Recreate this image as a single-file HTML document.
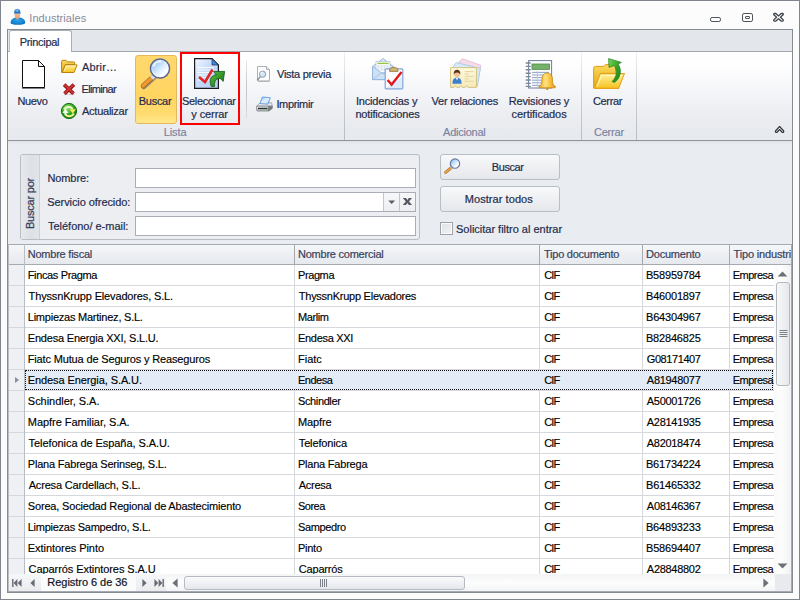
<!DOCTYPE html>
<html lang="es">
<head>
<meta charset="utf-8">
<title>Industriales</title>
<style>
*,*:before,*:after{box-sizing:border-box;margin:0;padding:0}
html,body{width:800px;height:600px;overflow:hidden}
body{position:relative;background:#fcfcfc;font-family:"Liberation Sans",sans-serif;font-size:11px;letter-spacing:-0.2px;color:#2c3452;line-height:13px}
#win{position:absolute;left:0;top:0;width:800px;height:600px;background:#fcfcfc;overflow:hidden}
#winb{position:absolute;left:0;top:0;width:800px;height:600px;border:1px solid #80858d;pointer-events:none}
#frame{position:absolute;left:7px;top:29px;width:786px;height:564px;border:1px solid #868b92;background:#e9ecf0}
.t{position:absolute;white-space:nowrap}
svg{position:absolute;overflow:visible}
/* title */
.ttl{color:#878b9c}
/* tabs (page coords) */
#tabbar{position:absolute;left:8px;top:30px;width:784px;height:21px;background:#e3e6ea}
#tabline{position:absolute;left:8px;top:51px;width:784px;height:1px;background:#a3a8ae}
#tab{position:absolute;left:9px;top:30px;width:63px;height:22px;background:#fff;border:1px solid #a9aeb5;border-left-color:#bcc0c6;border-bottom:none;border-radius:3px 3px 0 0}
/* ribbon */
#ribbon{position:absolute;left:8px;top:52px;width:784px;height:88px;background:linear-gradient(#ffffff 0,#fefefe 14%,#f5f6f9 42%,#ebedf1 72%,#e6e9ed 100%)}
#ribline{position:absolute;left:8px;top:140px;width:784px;height:1px;background:#8f949b}
#ribshadow{position:absolute;left:8px;top:141px;width:784px;height:3px;background:linear-gradient(#dfe2e6,#e9ecf0)}
.gsep{position:absolute;top:52px;width:1px;height:88px;background:linear-gradient(#eef0f2,#c9cdd3 50%,#b9bec5)}
.isep{position:absolute;top:60px;width:1px;height:58px;background:linear-gradient(#e6e8eb,#bfc3c9 50%,#d9dce0)}
.cap{position:absolute;color:#79819f;white-space:nowrap;-webkit-text-stroke:0.15px #79819f}
.lbl{position:absolute;color:#232c4b;white-space:nowrap;-webkit-text-stroke:0.2px #232c4b}
/* search area */
#gb{position:absolute;left:20px;top:154px;width:400px;height:86px;border:1px solid #b9bdc4;border-radius:3px;background:#eceef2}
#gbcap{position:absolute;left:21px;top:155px;width:19px;height:84px;background:linear-gradient(90deg,#e7e9ed,#dde0e4 55%,#e1e4e8);border-right:1px solid #cdd1d6;border-radius:2px 0 0 2px}
#gbcapt{position:absolute;left:4px;top:197px;width:52px;height:13px;transform:rotate(-90deg);text-align:center;white-space:nowrap;color:#333c58;-webkit-text-stroke:0.2px #333c58}
.inp{position:absolute;background:#fff;border:1px solid #a9aeb6;height:20px}
.btn{position:absolute;border:1px solid #b9bdc4;border-radius:3px;background:linear-gradient(#f8f9fa,#eceef1 60%,#e6e8ec);height:26px;width:120px}
/* grid */
#grid{position:absolute;left:8px;top:244px;width:784px;height:330px;background:#fff;overflow:hidden}
#grid>*{position:absolute}
#ghead{left:0;top:0;width:784px;height:21px;background:linear-gradient(#f6f7f9,#eceef2 55%,#e6e9ed);border-top:1px solid #a5aab1;border-bottom:1px solid #a5aab1}
#hclip{position:absolute;left:0;top:0;width:791px;height:600px;overflow:hidden;pointer-events:none}
.hd{position:absolute;color:#37405c;white-space:nowrap;-webkit-text-stroke:0.2px #37405c}
.navt{position:absolute;color:#10131f;white-space:nowrap;-webkit-text-stroke:0.2px #10131f}
.hs{top:0;width:1px;height:21px;background:#a5aab1}
.vs{top:21px;width:1px;height:312px;background:#d5d8dd}
.row{left:0;width:766px;height:21px;border-bottom:1px solid #d5d8dd;color:#000;-webkit-text-stroke:0.15px #000}
.row span{position:absolute;top:4px;white-space:nowrap}
.row .c0{left:0;top:0;width:16px;height:20px;background:#eef0f3}
.row.sel{background:#e2ebf6}
.row.sel:after{content:"";position:absolute;left:17px;top:0;width:748px;height:20px;border:1px dotted #111}
.ind{position:absolute;left:7px;top:7px;width:0;height:0;border-left:4px solid #8a8f9a;border-top:3.5px solid transparent;border-bottom:3.5px solid transparent}
#gleft{left:0;top:0;width:1px;height:330px;background:#b9bdc4}
#indsep{left:16px;top:0;width:1px;height:332px;background:#b9bdc4}
/* scrollbars */
#vsb{left:766px;top:21px;width:17px;height:309px;background:linear-gradient(90deg,#fafafb,#fdfdfd 40%,#f1f2f4)}
#gright{left:783px;top:0;width:1px;height:330px;background:#a5aab2}
#vthumb{position:absolute;left:2px;top:17px;width:14px;height:104px;border:1px solid #b5bac1;border-radius:3px;background:linear-gradient(90deg,#f7f8f9,#e6e8ec)}
#nav{position:absolute;left:8px;top:574px;width:784px;height:18px;border-bottom:1px solid #a5aab2;background:linear-gradient(#f6f7f9,#e9ebee)}
#navleft{position:absolute;left:0;top:0;width:1px;height:17px;background:#b9bdc4}
#navlbl{position:absolute;left:33px;top:0;width:95px;height:17px;background:#fbfbfc}
#hsb{position:absolute;left:158px;top:0;width:609px;height:17px;background:linear-gradient(#f3f4f6,#fdfdfd 50%,#f3f4f6)}
#hthumb{position:absolute;left:18px;top:2px;width:281px;height:14px;border:1px solid #b5bac1;border-radius:3px;background:linear-gradient(#f9fafb,#e6e8ec)}
#corner{position:absolute;left:767px;top:0;width:16px;height:17px;background:#e8eaee}
#navright{position:absolute;left:783px;top:0;width:1px;height:17px;background:#a5aab2}
</style>
</head>
<body>
<div id="win">
<div id="frame"></div>
<!-- title bar -->
<svg id="ico-user" style="left:9px;top:8px" width="18" height="18" viewBox="0 0 18 18">
  <defs>
    <radialGradient id="gbody" cx=".5" cy=".35" r=".75"><stop offset="0" stop-color="#2ea2e6"/><stop offset=".6" stop-color="#1485d2"/><stop offset="1" stop-color="#0a62b4"/></radialGradient>
    <linearGradient id="gcap" x1="0" y1="0" x2="0" y2="1"><stop offset="0" stop-color="#4c9ee2"/><stop offset="1" stop-color="#1c69bf"/></linearGradient>
    <linearGradient id="gface" x1="0" y1="0" x2="0" y2="1"><stop offset="0" stop-color="#f7d2b4"/><stop offset="1" stop-color="#ea9e72"/></linearGradient>
  </defs>
  <path d="M1.6 14.8 C1.6 11.4 4.4 10 6.8 9.6 L11 9.6 C13.4 10 16.2 11.4 16.2 14.8 C16.2 16.2 13 16.8 8.9 16.8 C4.8 16.8 1.6 16.2 1.6 14.8 Z" fill="url(#gbody)"/>
  <path d="M6.2 9.4 L8.3 11.9 L10.4 9.4 L10 8 L6.6 8 Z" fill="#e8a079"/>
  <ellipse cx="8.3" cy="6.4" rx="2.8" ry="3.4" fill="url(#gface)"/>
  <path d="M5.1 5 C5.1 2.2 6.5 .8 8.3 .8 C10.1 .8 11.5 2.2 11.5 5 L12.2 5.4 L4.8 5.4 Z" fill="url(#gcap)"/>
  <path d="M7.4 1.6 L9 1.6 L9.4 3.6 L7.2 3.6 Z" fill="#a9d0f2" opacity=".7"/>
</svg>
<span class="t ttl" style="left:29.29px;top:12px;letter-spacing:0.057px">Industriales</span>
<svg id="ico-min" style="left:709px;top:16px" width="13" height="7" viewBox="0 0 13 7"><rect x="1.5" y="1.5" width="10" height="4" rx="1.6" fill="#fff" stroke="#4c515a" stroke-width="1"/></svg>
<svg id="ico-max" style="left:741px;top:12px" width="13" height="11" viewBox="0 0 13 11"><rect x="1.5" y="1.5" width="10" height="8" rx="1.6" fill="#fff" stroke="#4c515a" stroke-width="1"/><rect x="4.5" y="4.5" width="4" height="2" rx=".5" fill="#fff" stroke="#4c515a" stroke-width="1"/></svg>
<svg id="ico-close" style="left:772px;top:12px" width="13" height="11" viewBox="0 0 13 11"><path d="M2.2 1.5 L3.9 1.5 L6.5 3.9 L9.1 1.5 L10.8 1.5 Q11.8 2.3 10.9 3.1 L8.4 5.3 L10.9 7.5 Q11.8 8.3 10.8 9.1 L9.1 9.1 L6.5 6.7 L3.9 9.1 L2.2 9.1 Q1.2 8.3 2.1 7.5 L4.6 5.3 L2.1 3.1 Q1.2 2.3 2.2 1.5 Z" fill="#fff" stroke="#40454d" stroke-width="1.3" stroke-linejoin="round"/></svg>
<div id="tabbar"></div>
<div id="tabline"></div>
<div id="tab"></div>
<span class="lbl" style="left:19.67px;top:36px;letter-spacing:-0.297px">Principal</span>
<!-- ribbon -->
<div id="ribbon"></div>
<div id="ribline"></div>
<div id="ribshadow"></div>
<svg width="0" height="0" style="left:0;top:0">
  <defs>
    <linearGradient id="gFold" x1="0" y1="0" x2="0" y2="1"><stop offset="0" stop-color="#fff2a0"/><stop offset="1" stop-color="#f6c21c"/></linearGradient>
    <linearGradient id="gFoldB" x1="0" y1="0" x2="0" y2="1"><stop offset="0" stop-color="#fbd95e"/><stop offset="1" stop-color="#e3a810"/></linearGradient>
    <linearGradient id="gLens" x1="0.1" y1="0.1" x2="0.9" y2="0.9"><stop offset="0" stop-color="#86c0f2"/><stop offset=".45" stop-color="#cfe6fb"/><stop offset=".8" stop-color="#ffffff"/><stop offset="1" stop-color="#e4f1fd"/></linearGradient>
    <linearGradient id="gHandle" x1="0" y1="0" x2="1" y2="1"><stop offset="0" stop-color="#ffb84d"/><stop offset="1" stop-color="#e07a10"/></linearGradient>
    <radialGradient id="gGreen" cx=".4" cy=".3" r=".75"><stop offset="0" stop-color="#8be06a"/><stop offset=".6" stop-color="#2ba31d"/><stop offset="1" stop-color="#0f7a0f"/></radialGradient>
    <linearGradient id="gDoc" x1="0" y1="0" x2="1" y2="1"><stop offset="0" stop-color="#f4f8ff"/><stop offset=".45" stop-color="#c6dafa"/><stop offset="1" stop-color="#b9cdf5"/></linearGradient>
    <linearGradient id="gArrow" x1="0" y1="0" x2="1" y2="1"><stop offset="0" stop-color="#58c043"/><stop offset="1" stop-color="#166d16"/></linearGradient>
    <linearGradient id="gEnv" x1="0" y1="0" x2="0" y2="1"><stop offset="0" stop-color="#eaf3fc"/><stop offset="1" stop-color="#b4d0ee"/></linearGradient>
    <linearGradient id="gBell" x1="0" y1="0" x2="1" y2="0"><stop offset="0" stop-color="#eaa51a"/><stop offset=".4" stop-color="#ffe283"/><stop offset=".7" stop-color="#f6bf3a"/><stop offset="1" stop-color="#d98f0e"/></linearGradient>
    <linearGradient id="gCard" x1="0" y1="0" x2="0" y2="1"><stop offset="0" stop-color="#fefadf"/><stop offset="1" stop-color="#f4e9b8"/></linearGradient>
    <linearGradient id="gArrow2" x1="0" y1="0" x2="1" y2="1"><stop offset="0" stop-color="#7ed45a"/><stop offset=".5" stop-color="#35a528"/><stop offset="1" stop-color="#187a18"/></linearGradient>
    <linearGradient id="gPrn" x1="0" y1="0" x2="0" y2="1"><stop offset="0" stop-color="#f6f7f8"/><stop offset="1" stop-color="#b9bdc2"/></linearGradient>
    <linearGradient id="gPaper" x1="0" y1="0" x2="1" y2="1"><stop offset="0" stop-color="#7fb7ee"/><stop offset=".5" stop-color="#e6f1fc"/><stop offset="1" stop-color="#a9cff3"/></linearGradient>
  </defs>
</svg>

<!-- Nuevo -->
<svg style="left:22px;top:60px" width="24" height="30" viewBox="0 0 24 30">
  <path d="M0.5 0.5 L16.5 0.5 L22.5 6.5 L22.5 27.5 L0.5 27.5 Z" fill="#fff" stroke="#111" stroke-width="1"/>
  <path d="M16.5 0.5 L16.5 6.5 L22.5 6.5 Z" fill="#f4f4f4" stroke="#111" stroke-width="1" stroke-linejoin="round"/>
  <path d="M0 28.3 L23 28.3" stroke="#000" stroke-width="1" opacity=".6"/>
</svg>
<span class="lbl" style="left:17.47px;top:95px;letter-spacing:-0.367px">Nuevo</span>

<!-- Abrir -->
<svg style="left:61px;top:59px" width="17" height="15" viewBox="0 0 17 15">
  <path d="M.6 13.4 L.6 2.4 Q.6 1.3 1.7 1.3 L5 1.3 L6.4 2.9 L12.8 2.9 Q13.7 2.9 13.7 3.9 L13.7 5.6 L4.6 5.6 L1.6 13.4 Z" fill="url(#gFoldB)" stroke="#b9820c" stroke-width="1"/>
  <path d="M1.3 13.5 L4.4 5.9 L16.1 5.9 L13 13.5 Z" fill="url(#gFold)" stroke="#b9820c" stroke-width="1" stroke-linejoin="round"/>
  <path d="M2.8 12.4 L5.2 6.9 L14.6 6.9" fill="none" stroke="#fffbd6" stroke-width=".8" opacity=".9"/>
</svg>
<span class="lbl" style="left:82.04px;top:61px;letter-spacing:0.139px">Abrir…</span>

<!-- Eliminar -->
<svg style="left:62px;top:82px" width="14" height="14" viewBox="0 0 14 14">
  <path d="M2 12.6 L12.4 12.6" stroke="#9aa0a8" stroke-width="1" opacity=".45"/>
  <path d="M2.1 2.6 L11.5 11.6 M11.9 2.6 L2.5 11.6" stroke="#8f1010" stroke-width="3.6" stroke-linecap="butt"/>
  <path d="M2.3 2.6 L11.5 11.4 M11.7 2.6 L2.5 11.4" stroke="#c42222" stroke-width="2.1" stroke-linecap="butt"/>
  <path d="M2.3 2.6 L11.5 11.4 M11.7 2.6 L2.5 11.4" stroke="#e86a6a" stroke-width="1.6" stroke-dasharray="1 1" opacity=".55"/>
</svg>
<span class="lbl" style="left:81.47px;top:83px;letter-spacing:-0.639px">Eliminar</span>

<!-- Actualizar -->
<svg style="left:61px;top:103px" width="17" height="17" viewBox="0 0 17 17">
  <circle cx="8" cy="8" r="7.6" fill="url(#gGreen)" stroke="#136c13" stroke-width="1"/>
  <path d="M3 6.6 A5.2 5.2 0 0 1 11.8 6" fill="none" stroke="#e9f6c4" stroke-width="2.1"/>
  <path d="M8.6 6.2 L14.9 6.2 L11.75 10.4 Z" fill="#ffe95e"/>
  <path d="M12.9 10.4 A5.2 5.2 0 0 1 4.5 11.6" fill="none" stroke="#f1ee8e" stroke-width="2.1"/>
  <path d="M1.3 10 L7.6 10 L4.45 5.8 Z" fill="#f6fcea"/>
  <path d="M4.45 9.8 L4.45 12" stroke="#f6fcea" stroke-width="2.1"/>
</svg>
<span class="lbl" style="left:82.04px;top:105px;letter-spacing:-0.254px">Actualizar</span>

<!-- Buscar (highlighted) -->
<div style="position:absolute;left:135px;top:55px;width:42px;height:69px;border:1px solid #e5b85c;border-radius:3px;background:linear-gradient(#ffd86e 0,#ffd561 60%,#ffdb6f 85%,#ffe88a 100%)"></div>
<svg style="left:139px;top:57px" width="34" height="34" viewBox="0 0 34 34">
  <path d="M15.2 20.6 L4.8 30" stroke="#6f747c" stroke-width="4.6" stroke-linecap="round" opacity=".75"/>
  <path d="M14.5 19.5 L4.2 28.8" stroke="#a8641c" stroke-width="4.8" stroke-linecap="round"/>
  <path d="M14.5 19.5 L4.2 28.8" stroke="url(#gHandle)" stroke-width="3.4" stroke-linecap="round"/>
  <path d="M15.2 18.8 L12.6 21.2" stroke="#d9dde2" stroke-width="4.4"/>
  <circle cx="21.6" cy="12.3" r="9.6" fill="#6a6f86" opacity=".35"/>
  <circle cx="21" cy="11.5" r="9.5" fill="url(#gLens)" stroke="#5b6690" stroke-width="1.6"/>
  <circle cx="21" cy="11.5" r="8.3" fill="none" stroke="#ffffff" stroke-width=".8" opacity=".55"/>
  <path d="M14.5 9.5 A7 7 0 0 1 22 4.6" fill="none" stroke="#fff" stroke-width="1.6" opacity=".9"/>
</svg>
<span class="lbl" style="left:138.77px;top:95px;letter-spacing:-0.276px">Buscar</span>

<!-- Seleccionar y cerrar -->
<div style="position:absolute;left:180px;top:52px;width:60px;height:73px;border:2px solid #f00"></div>
<svg style="left:193px;top:57px" width="34" height="34" viewBox="0 0 34 34">
  <path d="M1.6 1.6 L19 1.6 L25.4 8 L25.4 31.4 L1.6 31.4 Z" fill="url(#gDoc)" stroke="#1a1a1a" stroke-width="1.2"/>
  <path d="M19 1.6 L19 8 L25.4 8 Z" fill="#3d8de6" stroke="#1a1a1a" stroke-width=".6"/>
  <path d="M4.5 10.5 H21 M4.5 13 H21 M4.5 15.5 H21 M4.5 18 H21 M4.5 20.5 H16 M4.5 23 H16" stroke="#fff" stroke-width="1" opacity=".85"/>
  <path d="M6 20 L12 25 L19.5 12.5" fill="none" stroke="#e0262a" stroke-width="2.6"/>
  <path d="M18.2 29.4 C15.4 22 19 17.6 23.4 17.8 L20.4 14.6 L31.6 14.4 L30.2 24.4 L27.2 21.4 C23.2 21.2 21 24 21.6 29.4 Z" fill="url(#gArrow)" stroke="#0e5c12" stroke-width=".8"/>
</svg>
<span class="lbl" style="left:182.06px;top:95px;letter-spacing:-0.351px">Seleccionar</span>
<span class="lbl" style="left:191.24px;top:108px;letter-spacing:-0.079px">y cerrar</span>

<div class="isep" style="left:246px"></div>

<!-- Vista previa -->
<svg style="left:256px;top:65px" width="16" height="17" viewBox="0 0 16 17">
  <path d="M1.5 1.5 L10.5 1.5 L13.5 4.5 L13.5 15.9 L1.5 15.9 Z" fill="#fdfdfd" stroke="#adb0b5" stroke-width="1"/>
  <path d="M10.5 1.5 L10.5 4.5 L13.5 4.5" fill="#f0f0f0" stroke="#adb0b5" stroke-width="1"/>
  <path d="M2 16.6 L13.6 16.6" stroke="#8d9096" stroke-width=".8" opacity=".7"/>
  <circle cx="6.6" cy="9.2" r="3.1" fill="#d3e8fb" stroke="#8b97ad" stroke-width="1"/>
  <path d="M4.5 8.4 A2.2 2.2 0 0 1 6.9 7" fill="none" stroke="#fff" stroke-width=".8"/>
  <path d="M4.3 11.7 L1.2 15.2" stroke="#8a8f98" stroke-width="1.5"/>
</svg>
<span class="lbl" style="left:277.04px;top:68px;letter-spacing:-0.276px">Vista previa</span>

<!-- Imprimir -->
<svg style="left:256px;top:96px" width="17" height="16" viewBox="0 0 17 16">
  <path d="M.7 10.2 L4 6.8 L15.6 6.8 L16.3 10.2 Z" fill="#e7e9eb" stroke="#8e9298" stroke-width=".7"/>
  <path d="M6.4 1 L14.4 1.7 L11.8 8.2 L3.9 7.5 Z" fill="url(#gPaper)" stroke="#4f90d8" stroke-width=".8"/>
  <path d="M.7 10.2 L12.8 10.2 L12.8 15 L1.7 15 Q.7 15 .7 14 Z" fill="url(#gPrn)" stroke="#6b6f75" stroke-width=".7"/>
  <path d="M12.8 10.2 L16.3 10.2 L16.3 12.4 L12.8 15 Z" fill="#7c8086" stroke="#5d6066" stroke-width=".6"/>
  <path d="M2 12.5 L11.6 12.5" stroke="#2e3135" stroke-width="1.5"/>
  <circle cx="10.9" cy="14" r=".65" fill="#5fd13c"/>
</svg>
<span class="lbl" style="left:276.39px;top:98px;letter-spacing:-0.343px">Imprimir</span>

<div class="gsep" style="left:344px"></div>

<!-- Incidencias y notificaciones -->
<svg style="left:371px;top:57px" width="34" height="34" viewBox="0 0 34 34">
  <path d="M1.6 9.6 L12 1.6 L22.4 9.6 L22.4 22.6 L1.6 22.6 Z" fill="url(#gEnv)" stroke="#8fb3dc" stroke-width="1"/>
  <rect x="5" y="4.4" width="14" height="11" fill="#fff" stroke="#a9c2e0" stroke-width=".7"/>
  <path d="M6.4 6.4 H17.6" stroke="#9ac43c" stroke-width="1.4"/>
  <path d="M6.4 9 H17.6 M6.4 11 H17.6 M6.4 13 H17.6" stroke="#b8c6d8" stroke-width="1" stroke-dasharray="2 1"/>
  <path d="M1.6 9.6 L12 17 L22.4 9.6 L22.4 22.6 L1.6 22.6 Z" fill="#cfe1f5" stroke="#8fb3dc" stroke-width=".8"/>
  <path d="M1.8 22.4 L10.4 15.8 M22.2 22.4 L13.6 15.8" stroke="#9bbce0" stroke-width=".8"/>
  <rect x="14.2" y="11.8" width="17.6" height="20" rx="1" fill="#fdfdff" stroke="#7ea3d8" stroke-width="1.2"/>
  <path d="M15 31 L31 31 L31 20 Z" fill="#d6e3f8" opacity=".8"/>
  <path d="M18.6 13 Q18.6 10.4 22.8 10.4 Q27 10.4 27 13 L27 14.4 L18.6 14.4 Z" fill="#d2b46c" stroke="#8f7638" stroke-width=".8"/>
  <path d="M16.6 23 L20.6 27.6 L30.6 15" fill="none" stroke="#e0191e" stroke-width="2.4"/>
</svg>
<span class="lbl" style="left:355.89px;top:95px;letter-spacing:-0.158px">Incidencias y</span>
<span class="lbl" style="left:355.45px;top:108px;letter-spacing:-0.189px">notificaciones</span>

<!-- Ver relaciones -->
<svg style="left:449px;top:57px" width="34" height="34" viewBox="0 0 34 34">
  <path d="M10 5 L13.6 1.8 L32 8.4 L28 27 L10 21 Z" fill="#f8dbe8" stroke="#dcb8cc" stroke-width=".8"/>
  <path d="M4 10 L7.2 5.6 L31.4 11.4 L28.4 29.4 L4 25 Z" fill="#d5e9f8" stroke="#a4c6e0" stroke-width=".8"/>
  <path d="M1.6 10.6 L27.4 10.6 L27.4 30.4 L19 30.4 L17.6 28.6 L16.2 30.4 L13.4 30.4 L12 28.6 L10.6 30.4 L7.8 30.4 L6.4 28.6 L5 30.4 L1.6 30.4 Z" fill="url(#gCard)" stroke="#d0bc74" stroke-width=".9"/>
  <path d="M15.6 14.6 H24.6 M15.6 17 H20 M15.6 19.4 H24.6 M15.6 21.8 H20 M15.6 24.2 H24.6" stroke="#e0d4a2" stroke-width="1"/>
  <path d="M3.4 26.8 Q3.4 20.6 8 20.6 Q12.6 20.6 12.6 26.8 Z" fill="#3a7fd0"/>
  <path d="M6.6 20.8 L8 23.4 L9.4 20.8 Z" fill="#e8eef6"/>
  <circle cx="8" cy="17.2" r="2.9" fill="#efbf96"/>
  <path d="M4.7 17.4 Q4.5 12.8 8 12.8 Q11.5 12.8 11.3 17.4 Q10.4 15.4 8 15.4 Q5.6 15.4 4.7 17.4 Z" fill="#5c3212"/>
</svg>
<span class="lbl" style="left:431.54px;top:95px;letter-spacing:-0.233px">Ver relaciones</span>

<!-- Revisiones y certificados -->
<svg style="left:525px;top:58px" width="34" height="34" viewBox="0 0 34 34">
  <rect x="3.6" y="2.6" width="23" height="27.4" fill="#fcfcfd" stroke="#6a7d9c" stroke-width="1"/>
  <rect x="7" y="6" width="17.4" height="5.4" fill="#74b06a" stroke="#4e8c46" stroke-width=".8"/>
  <path d="M7 14.4 H24 M7 17 H24 M7 19.6 H24 M7 22.2 H24 M7 24.8 H24 M7 27.4 H24" stroke="#8fa3c4" stroke-width="1"/>
  <path d="M12.4 13 V28.6" stroke="#b8c4d8" stroke-width=".8"/>
  <path d="M1.2 5 H5.2 M1.2 8.4 H5.2 M1.2 11.8 H5.2 M1.2 15.2 H5.2 M1.2 18.6 H5.2 M1.2 22 H5.2 M1.2 25.4 H5.2 M1.2 28.4 H5.2" stroke="#7d8796" stroke-width="1.4" stroke-linecap="round"/>
  <path d="M13.8 28.6 Q17 27.4 16.9 22.2 Q16.8 15 22.2 15 Q27.6 15 27.5 22.2 Q27.4 27.4 30.6 28.6 Q30.6 29.8 29.2 29.8 L15.2 29.8 Q13.8 29.8 13.8 28.6 Z" fill="url(#gBell)" stroke="#c88a10" stroke-width=".8"/>
  <circle cx="22.2" cy="30.8" r="1.3" fill="#d48f12"/>
</svg>
<span class="lbl" style="left:508.87px;top:95px;letter-spacing:-0.189px">Revisiones y</span>
<span class="lbl" style="left:511.5px;top:108px;letter-spacing:-0.046px">certificados</span>

<div class="gsep" style="left:581px"></div>

<!-- Cerrar -->
<svg style="left:592px;top:57px" width="34" height="34" viewBox="0 0 34 34">
  <path d="M1.6 31 L1.6 11.4 Q1.6 9.4 3.6 9.4 L11.6 9.4 L13.6 7.6 L21.6 7.6 Q23.6 7.6 23.6 9.6 L23.6 16.4 L8.6 16.4 L3 31 Z" fill="url(#gFoldB)" stroke="#e39a16" stroke-width="1"/>
  <path d="M2.4 31.4 L8.2 16.6 L32.4 16.6 L26.6 31.4 Z" fill="url(#gFold)" stroke="#e9a21c" stroke-width="1.1" stroke-linejoin="round"/>
  <path d="M5 29.8 L9.6 18.4 L29.8 18.4" fill="none" stroke="#fff8d0" stroke-width="1" opacity=".9"/>
  <path d="M20 24.6 C25.4 19.6 25.4 12.6 22.2 8.6 L17 10.4 L16.6 1.6 L29.4 5.4 L26 7 C30.4 13 28.4 21.4 22.6 25.4 Z" fill="url(#gArrow2)" stroke="#23801f" stroke-width=".7"/>
</svg>
<span class="lbl" style="left:593.0px;top:95px;letter-spacing:-0.364px">Cerrar</span>

<div class="gsep" style="left:636px"></div>

<span class="cap" style="left:163.77px;top:126px;letter-spacing:-0.102px">Lista</span>
<span class="cap" style="left:443.04px;top:126px;letter-spacing:-0.236px">Adicional</span>
<span class="cap" style="left:594.0px;top:126px;letter-spacing:-0.224px">Cerrar</span>

<svg style="left:774.3px;top:125px" width="11.2" height="9" viewBox="0 0 12 9" preserveAspectRatio="none"><path d="M1.6 6 L6 1.6 L10.4 6 Q10.6 7.6 9 7.4 L6 4.6 L3 7.4 Q1.4 7.6 1.6 6 Z" fill="#fff" stroke="#33383f" stroke-width="1.35" stroke-linejoin="round"/></svg>
<!-- search panel -->
<div id="gb"></div>
<div id="gbcap"></div>
<span id="gbcapt">Buscar por</span>
<span class="lbl" style="left:47.47px;top:172px;letter-spacing:-0.109px">Nombre:</span>
<span class="lbl" style="left:47.26px;top:196px;letter-spacing:-0.074px">Servicio ofrecido:</span>
<span class="lbl" style="left:48.01px;top:220px;letter-spacing:-0.018px">Teléfono/ e-mail:</span>
<div class="inp" style="left:135px;top:168px;width:281px"></div>
<div class="inp" style="left:135px;top:192px;width:281px">
  <div style="position:absolute;left:247px;top:0;width:17px;height:18px;border-left:1px solid #c3c7cd;background:linear-gradient(#f6f7f8,#eceef1)"></div>
  <div style="position:absolute;left:263px;top:0;width:16px;height:18px;border-left:1px solid #c3c7cd;background:linear-gradient(#f6f7f8,#eceef1)"></div>
  <svg style="left:252px;top:7px" width="8" height="5" viewBox="0 0 8 5"><path d="M.3 .5 L7.1 .5 L3.7 4.1 Z" fill="#575c65"/></svg>
  <svg style="left:266px;top:4px" width="11" height="9" viewBox="0 0 11 9"><path d="M.8 1 L4 1 L5.4 3.1 L6.8 1 L10 1 L7 4.5 L10 8 L6.8 8 L5.4 5.9 L4 8 L.8 8 L3.8 4.5 Z" fill="#555a63"/></svg>
</div>
<div class="inp" style="left:135px;top:216px;width:281px"></div>

<div class="btn" style="left:440px;top:154px"></div>
<svg style="left:443px;top:157px" width="18" height="18" viewBox="0 0 18 18">
  <path d="M8.4 10.6 L2.6 15.4" stroke="#9a6a2a" stroke-width="2.8" stroke-linecap="round"/>
  <path d="M8.4 10.6 L2.6 15.4" stroke="#f6a93a" stroke-width="1.7" stroke-linecap="round"/>
  <path d="M9.3 9.8 L7.9 11" stroke="#cfd3d8" stroke-width="2.6"/>
  <circle cx="12" cy="6.6" r="4.7" fill="url(#gLens)" stroke="#66739a" stroke-width="1.1"/>
</svg>
<span class="lbl" style="left:491.77px;top:161px;letter-spacing:-0.416px">Buscar</span>
<div class="btn" style="left:440px;top:186px"></div>
<span class="lbl" style="left:464.77px;top:193px;letter-spacing:0.063px">Mostrar todos</span>
<div style="position:absolute;left:440px;top:222px;width:13px;height:13px;border:1px solid #9ea3ab;background:linear-gradient(135deg,#dfe1e4,#f1f2f4);box-shadow:inset 0 0 0 1px #fbfbfc"></div>
<span class="lbl" style="left:456.06px;top:223px;letter-spacing:-0.012px">Solicitar filtro al entrar</span>
<!-- grid -->
<div id="grid">
<div id="ghead"></div>
<div class="hs" style="left:16px"></div><div class="hs" style="left:286px"></div><div class="hs" style="left:531px"></div><div class="hs" style="left:634px"></div><div class="hs" style="left:721px"></div>
<div class="vs" style="left:286px"></div><div class="vs" style="left:531px"></div><div class="vs" style="left:634px"></div><div class="vs" style="left:721px"></div>
<div class="row" style="top:21px"><span class="c0"></span><span style="left:19.77px;letter-spacing:-0.36px">Fincas Pragma</span><span style="left:289.97px;letter-spacing:-0.395px">Pragma</span><span style="left:536.2px;letter-spacing:-0.802px">CIF</span><span style="left:637.97px;letter-spacing:-0.195px">B58959784</span><span style="left:724.67px;letter-spacing:-0.502px">Empresa</span></div>
<div class="row" style="top:42px"><span class="c0"></span><span style="left:20.61px;letter-spacing:-0.153px">ThyssnKrupp Elevadores, S.L.</span><span style="left:290.81px;letter-spacing:-0.254px">ThyssnKrupp Elevadores</span><span style="left:536.2px;letter-spacing:-0.802px">CIF</span><span style="left:637.97px;letter-spacing:-0.18px">B46001897</span><span style="left:724.67px;letter-spacing:-0.502px">Empresa</span></div>
<div class="row" style="top:63px"><span class="c0"></span><span style="left:19.77px;letter-spacing:-0.23px">Limpiezas Martinez, S.L.</span><span style="left:289.97px;letter-spacing:-0.394px">Marlim</span><span style="left:536.2px;letter-spacing:-0.802px">CIF</span><span style="left:637.97px;letter-spacing:-0.18px">B64304967</span><span style="left:724.67px;letter-spacing:-0.502px">Empresa</span></div>
<div class="row" style="top:84px"><span class="c0"></span><span style="left:19.77px;letter-spacing:-0.194px">Endesa Energia XXI, S.L.U.</span><span style="left:289.97px;letter-spacing:-0.295px">Endesa XXI</span><span style="left:536.2px;letter-spacing:-0.802px">CIF</span><span style="left:637.97px;letter-spacing:-0.185px">B82846825</span><span style="left:724.67px;letter-spacing:-0.502px">Empresa</span></div>
<div class="row" style="top:105px"><span class="c0"></span><span style="left:19.77px;letter-spacing:-0.155px">Fiatc Mutua de Seguros y Reaseguros</span><span style="left:289.97px;letter-spacing:0.008px">Fiatc</span><span style="left:536.2px;letter-spacing:-0.802px">CIF</span><span style="left:638.8px;letter-spacing:-0.426px">G08171407</span><span style="left:724.67px;letter-spacing:-0.502px">Empresa</span></div>
<div class="row sel" style="top:126px"><span class="c0"><i class="ind"></i></span><span style="left:19.77px;letter-spacing:-0.093px">Endesa Energia, S.A.U.</span><span style="left:289.97px;letter-spacing:-0.494px">Endesa</span><span style="left:536.2px;letter-spacing:-0.802px">CIF</span><span style="left:638.84px;letter-spacing:-0.289px">A81948077</span><span style="left:724.67px;letter-spacing:-0.502px">Empresa</span></div>
<div class="row" style="top:147px"><span class="c0"></span><span style="left:19.86px;letter-spacing:-0.039px">Schindler, S.A.</span><span style="left:290.06px;letter-spacing:-0.386px">Schindler</span><span style="left:536.2px;letter-spacing:-0.802px">CIF</span><span style="left:638.84px;letter-spacing:-0.293px">A50001726</span><span style="left:724.67px;letter-spacing:-0.502px">Empresa</span></div>
<div class="row" style="top:168px"><span class="c0"></span><span style="left:19.77px;letter-spacing:-0.042px">Mapfre Familiar, S.A.</span><span style="left:289.97px;letter-spacing:-0.098px">Mapfre</span><span style="left:536.2px;letter-spacing:-0.802px">CIF</span><span style="left:638.84px;letter-spacing:-0.294px">A28141935</span><span style="left:724.67px;letter-spacing:-0.502px">Empresa</span></div>
<div class="row" style="top:189px"><span class="c0"></span><span style="left:20.61px;letter-spacing:-0.067px">Telefonica de España, S.A.U.</span><span style="left:290.81px;letter-spacing:-0.147px">Telefonica</span><span style="left:536.2px;letter-spacing:-0.802px">CIF</span><span style="left:638.84px;letter-spacing:-0.303px">A82018474</span><span style="left:724.67px;letter-spacing:-0.502px">Empresa</span></div>
<div class="row" style="top:210px"><span class="c0"></span><span style="left:19.77px;letter-spacing:-0.195px">Plana Fabrega Serinseg, S.L.</span><span style="left:289.97px;letter-spacing:-0.217px">Plana Fabrega</span><span style="left:536.2px;letter-spacing:-0.802px">CIF</span><span style="left:637.97px;letter-spacing:-0.195px">B61734224</span><span style="left:724.67px;letter-spacing:-0.502px">Empresa</span></div>
<div class="row" style="top:231px"><span class="c0"></span><span style="left:20.64px;letter-spacing:-0.166px">Acresa Cardellach, S.L.</span><span style="left:290.84px;letter-spacing:-0.296px">Acresa</span><span style="left:536.2px;letter-spacing:-0.802px">CIF</span><span style="left:637.97px;letter-spacing:-0.179px">B61465332</span><span style="left:724.67px;letter-spacing:-0.502px">Empresa</span></div>
<div class="row" style="top:252px"><span class="c0"></span><span style="left:19.86px;letter-spacing:-0.18px">Sorea, Sociedad Regional de Abastecimiento</span><span style="left:290.06px;letter-spacing:-0.516px">Sorea</span><span style="left:536.2px;letter-spacing:-0.802px">CIF</span><span style="left:638.84px;letter-spacing:-0.289px">A08146367</span><span style="left:724.67px;letter-spacing:-0.502px">Empresa</span></div>
<div class="row" style="top:273px"><span class="c0"></span><span style="left:19.77px;letter-spacing:-0.259px">Limpiezas Sampedro, S.L.</span><span style="left:290.06px;letter-spacing:-0.366px">Sampedro</span><span style="left:536.2px;letter-spacing:-0.802px">CIF</span><span style="left:637.97px;letter-spacing:-0.184px">B64893233</span><span style="left:724.67px;letter-spacing:-0.502px">Empresa</span></div>
<div class="row" style="top:294px"><span class="c0"></span><span style="left:19.77px;letter-spacing:-0.053px">Extintores Pinto</span><span style="left:289.97px;letter-spacing:-0.249px">Pinto</span><span style="left:536.2px;letter-spacing:-0.802px">CIF</span><span style="left:637.97px;letter-spacing:-0.18px">B58694407</span><span style="left:724.67px;letter-spacing:-0.502px">Empresa</span></div>
<div class="row" style="top:315px"><span class="c0"></span><span style="left:20.6px;letter-spacing:-0.077px">Caparrós Extintores S.A.U</span><span style="left:290.8px;letter-spacing:-0.197px">Caparrós</span><span style="left:536.2px;letter-spacing:-0.802px">CIF</span><span style="left:638.84px;letter-spacing:-0.288px">A28848802</span><span style="left:724.67px;letter-spacing:-0.502px">Empresa</span></div>
<div id="indsep"></div>
<div id="gleft"></div>
<div id="gright"></div>
<div id="vsb">
  <svg style="left:3px;top:6px" width="11" height="6" viewBox="0 0 11 6"><path d="M.6 5.6 L5.5 .6 L10.4 5.6 Z" fill="#6b6f76"/></svg>
  <div id="vthumb"></div>
  <svg style="left:5px;top:65px" width="9" height="8" viewBox="0 0 9 8"><path d="M.5 .5 H8.5 M.5 2.5 H8.5 M.5 4.5 H8.5 M.5 6.5 H8.5" stroke="#7b8089" stroke-width="1"/></svg>
  <svg style="left:3px;top:298px" width="11" height="6" viewBox="0 0 11 6"><path d="M.6 .4 L10.4 .4 L5.5 5.4 Z" fill="#6b6f76"/></svg>
</div>
</div>
<div id="hclip"><span class="hd" style="left:27.77px;top:248px;letter-spacing:-0.231px">Nombre fiscal</span><span class="hd" style="left:297.97px;top:248px;letter-spacing:-0.232px">Nombre comercial</span><span class="hd" style="left:544.01px;top:248px;letter-spacing:-0.24px">Tipo documento</span><span class="hd" style="left:645.97px;top:248px;letter-spacing:-0.196px">Documento</span><span class="hd" style="left:733.51px;top:248px;letter-spacing:-0.147px">Tipo industrial</span></div>
<!-- navigator -->
<div id="nav">
  <svg style="left:4px;top:5px" width="10" height="8" viewBox="0 0 10 8"><path d="M.8 0 V8" stroke="#666b73" stroke-width="1.4"/><path d="M5.4 0 L5.4 8 L1.6 4 Z M9.6 0 L9.6 8 L5.8 4 Z" fill="#666b73"/></svg>
  <svg style="left:22px;top:5px" width="5" height="8" viewBox="0 0 5 8"><path d="M4.6 0 L4.6 8 L.4 4 Z" fill="#666b73"/></svg>
  <div id="navlbl"></div>
  <svg style="left:134px;top:5px" width="5" height="8" viewBox="0 0 5 8"><path d="M.4 0 L.4 8 L4.6 4 Z" fill="#666b73"/></svg>
  <svg style="left:146px;top:5px" width="10" height="8" viewBox="0 0 10 8"><path d="M9.2 0 V8" stroke="#666b73" stroke-width="1.4"/><path d="M.4 0 L.4 8 L4.2 4 Z M4.6 0 L4.6 8 L8.4 4 Z" fill="#666b73"/></svg>
  <div id="hsb">
    <svg style="left:6px;top:4px" width="6" height="10" viewBox="0 0 6 10"><path d="M5.6 .4 L5.6 9.6 L.4 5 Z" fill="#6b6f76"/></svg>
    <div id="hthumb"></div>
    <svg style="left:154px;top:5px" width="8" height="8" viewBox="0 0 8 8"><path d="M.5 0 V8 M2.5 0 V8 M4.5 0 V8 M6.5 0 V8" stroke="#7b8089" stroke-width="1"/></svg>
    <svg style="left:597px;top:4px" width="6" height="10" viewBox="0 0 6 10"><path d="M.4 .4 L.4 9.6 L5.6 5 Z" fill="#6b6f76"/></svg>
  </div>
  <div id="corner"></div><div id="navright"></div><div id="navleft"></div>
</div>
<span class="navt" style="left:47.37px;top:576px;letter-spacing:-0.041px">Registro 6 de 36</span>
<div id="winb"></div>
</div>
</body>
</html>
